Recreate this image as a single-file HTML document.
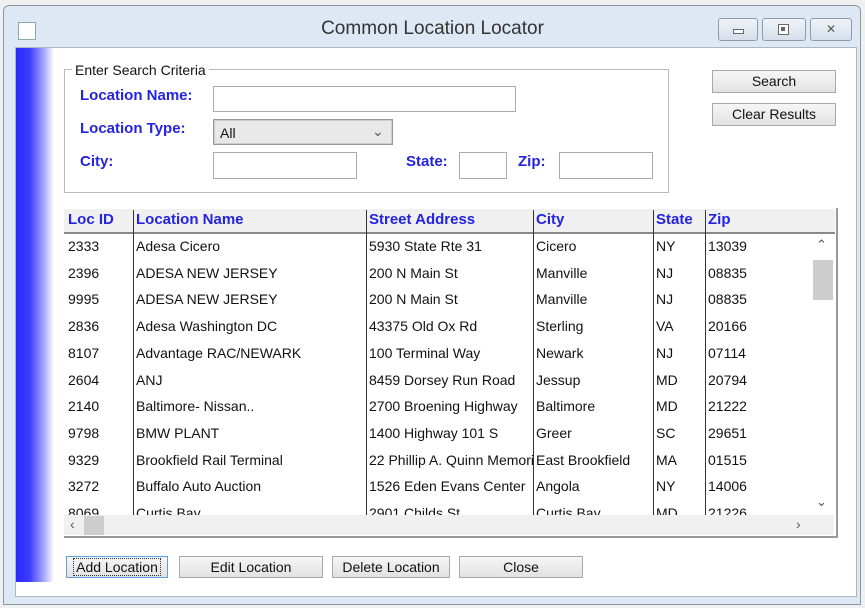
<!DOCTYPE html>
<html><head><meta charset="utf-8"><style>
body{margin:0;width:865px;height:608px;background:#f0f0f0;position:relative;overflow:hidden;font-family:"Liberation Sans Narrow","Liberation Sans",sans-serif;font-size:14px;color:#111}
.a{position:absolute}
.frame{left:3px;top:5px;width:856px;height:598px;background:#dde8f4;border:1px solid #8a98a8;border-radius:6px 6px 0 0}
.client{left:15px;top:47px;width:840px;height:548px;background:#fff;border:1px solid #a9b6c4}
.stripe{left:16px;top:48px;width:38px;height:534px;background:linear-gradient(90deg,#2a2aff 0%,#3c3cff 35%,#9c9cff 70%,#fff 100%)}
.lbl{color:#2323e0;font-weight:bold;font-size:15px}
.tb{background:#fff;border:1px solid #aaa}
.btn{background:linear-gradient(#f6f6f6,#e2e2e2);border:1px solid #a8a8a8;text-align:center;line-height:20px;font-size:14px}
.hd{color:#2323e0;font-weight:bold;top:211px;font-size:15px}
.vl{width:1px;background:#333}
.cell{white-space:nowrap;overflow:hidden}
.wb{top:18px;height:21px;border:1px solid #8e9bab;border-radius:3px;background:linear-gradient(#eef3f9,#d5dfea);text-align:center;font-size:12px;line-height:20px;color:#555}
</style></head><body>
<div class="a frame"></div>
<div class="a" style="left:18px;top:22px;width:16px;height:16px;background:#fff;border:1px solid #8aa"></div>
<div class="a" style="left:0;top:18px;width:865px;text-align:center;font-family:'Liberation Sans',sans-serif;font-size:19px;color:#333">Common Location Locator</div>
<div class="a wb" style="left:718px;width:38px"><span class="a" style="left:14px;top:10px;width:9px;height:3px;border:1px solid #666;background:#fff"></span></div>
<div class="a wb" style="left:762px;width:42px"><span class="a" style="left:15px;top:5px;width:9px;height:9px;border:1px solid #666;background:#fff"></span><span class="a" style="left:18px;top:8px;width:4px;height:4px;background:#666"></span></div>
<div class="a wb" style="left:810px;width:40px">&#10005;</div>
<div class="a client"></div>
<div class="a stripe"></div>

<div class="a" style="left:64px;top:69px;width:603px;height:122px;border:1px solid #bbb"></div>
<div class="a" style="left:72px;top:62px;background:#fff;padding:0 3px">Enter Search Criteria</div>
<div class="a lbl" style="left:80px;top:87px">Location Name:</div>
<div class="a tb" style="left:213px;top:86px;width:301px;height:24px"></div>
<div class="a lbl" style="left:80px;top:120px">Location Type:</div>
<div class="a" style="left:213px;top:119px;width:178px;height:24px;background:#e8e8e8;border:1px solid #999;box-shadow:inset 0 0 0 1px #ccc"><span class="a" style="left:6px;top:5px">All</span><span class="a" style="left:158px;top:3px;color:#555">&#8964;</span></div>
<div class="a lbl" style="left:80px;top:153px">City:</div>
<div class="a tb" style="left:213px;top:152px;width:142px;height:25px"></div>
<div class="a lbl" style="left:406px;top:153px">State:</div>
<div class="a tb" style="left:459px;top:152px;width:46px;height:25px"></div>
<div class="a lbl" style="left:518px;top:153px">Zip:</div>
<div class="a tb" style="left:559px;top:152px;width:92px;height:25px"></div>

<div class="a btn" style="left:712px;top:70px;width:122px;height:21px">Search</div>
<div class="a btn" style="left:712px;top:103px;width:122px;height:21px">Clear Results</div>

<div class="a" style="left:64px;top:208px;width:772px;height:328px;border-right:2px solid #999;border-bottom:2px solid #999"></div>
<div class="a" style="left:64px;top:209px;width:771px;height:23px;background:#f0f0f0;border-bottom:2px solid #888"></div>
<div class="a hd" style="left:68px">Loc ID</div>
<div class="a hd" style="left:136px">Location Name</div>
<div class="a hd" style="left:369px">Street Address</div>
<div class="a hd" style="left:536px">City</div>
<div class="a hd" style="left:656px">State</div>
<div class="a hd" style="left:708px">Zip</div>
<div class="a vl" style="left:133px;top:210px;height:305px"></div>
<div class="a vl" style="left:366px;top:210px;height:305px"></div>
<div class="a vl" style="left:533px;top:210px;height:305px"></div>
<div class="a vl" style="left:653px;top:210px;height:305px"></div>
<div class="a vl" style="left:705px;top:210px;height:305px"></div>

<div class="a" style="left:64px;top:236px;width:744px;height:279px;overflow:hidden">
<div id="rows"></div>
</div>
<div class="a" style="left:812px;top:236px;width:21px;height:279px;background:#fff"></div>
<div class="a" style="left:813px;top:260px;width:20px;height:40px;background:#cdcdcd"></div>
<div class="a" style="left:816px;top:237px;color:#555;font-size:13px">&#8963;</div>
<div class="a" style="left:816px;top:494px;color:#555;font-size:13px">&#8964;</div>
<div class="a" style="left:64px;top:515px;width:770px;height:20px;background:#f0f0f0"></div>
<div class="a" style="left:84px;top:516px;width:20px;height:19px;background:#cdcdcd"></div>
<div class="a" style="left:70px;top:516px;color:#555">&#8249;</div>
<div class="a" style="left:796px;top:516px;color:#555">&#8250;</div>

<div class="a btn" style="left:66px;top:556px;width:100px;height:20px;border-color:#5a9ee6"><span style="border:1px dotted #333;padding:0 2px">Add Location</span></div>
<div class="a btn" style="left:179px;top:556px;width:142px;height:20px">Edit Location</div>
<div class="a btn" style="left:332px;top:556px;width:116px;height:20px">Delete Location</div>
<div class="a btn" style="left:459px;top:556px;width:122px;height:20px">Close</div>

<script>
var d=[["2333","Adesa Cicero","5930 State Rte 31","Cicero","NY","13039"],["2396","ADESA NEW JERSEY","200 N Main St","Manville","NJ","08835"],["9995","ADESA NEW JERSEY","200 N Main St","Manville","NJ","08835"],["2836","Adesa Washington DC","43375 Old Ox Rd","Sterling","VA","20166"],["8107","Advantage RAC/NEWARK","100 Terminal Way","Newark","NJ","07114"],["2604","ANJ","8459 Dorsey Run Road","Jessup","MD","20794"],["2140","Baltimore- Nissan..","2700 Broening Highway","Baltimore","MD","21222"],["9798","BMW PLANT","1400 Highway 101 S","Greer","SC","29651"],["9329","Brookfield Rail Terminal","22 Phillip A. Quinn Memorial","East Brookfield","MA","01515"],["3272","Buffalo Auto Auction","1526 Eden Evans Center","Angola","NY","14006"],["8069","Curtis Bay","2901 Childs St","Curtis Bay","MD","21226"]];
var L=[4,72,305,472,592,644],W=[66,230,164,117,49,100],h="";
d.forEach(function(r,i){r.forEach(function(c,j){h+='<div class="a cell" style="left:'+L[j]+'px;top:'+(2+i*26.7)+'px;width:'+W[j]+'px">'+c+'</div>';});});
document.getElementById("rows").innerHTML=h;
</script>
</body></html>
